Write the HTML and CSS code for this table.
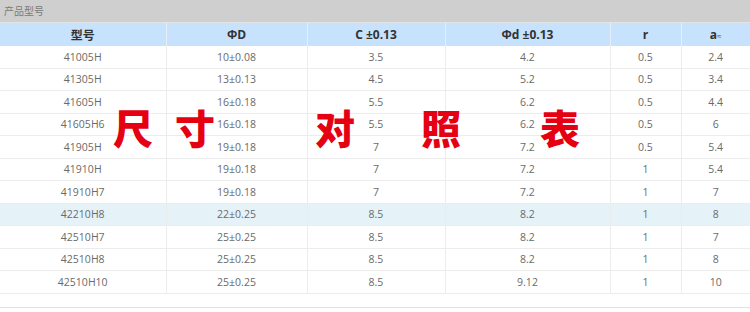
FILE: index.html
```html
<!DOCTYPE html>
<html lang="zh">
<head>
<meta charset="utf-8">
<link rel="stylesheet" href="styles.css">
</head>
<body>
<div class="page">
  <div class="titlebar">产品型号</div>
  <table class="spec">
    <colgroup>
      <col class="c1"><col class="c2"><col class="c3"><col class="c4"><col class="c5"><col class="c6">
    </colgroup>
    <thead>
      <tr><th>型号</th><th>ΦD</th><th>C ±0.13</th><th>Φd ±0.13</th><th>r</th><th>a<span class="approx">≈</span></th></tr>
    </thead>
    <tbody>
      <tr><td>41005H</td><td>10±0.08</td><td>3.5</td><td>4.2</td><td>0.5</td><td>2.4</td></tr>
      <tr><td>41305H</td><td>13±0.13</td><td>4.5</td><td>5.2</td><td>0.5</td><td>3.4</td></tr>
      <tr><td>41605H</td><td>16±0.18</td><td>5.5</td><td>6.2</td><td>0.5</td><td>4.4</td></tr>
      <tr><td>41605H6</td><td>16±0.18</td><td>5.5</td><td>6.2</td><td>0.5</td><td>6</td></tr>
      <tr><td>41905H</td><td>19±0.18</td><td>7</td><td>7.2</td><td>0.5</td><td>5.4</td></tr>
      <tr><td>41910H</td><td>19±0.18</td><td>7</td><td>7.2</td><td>1</td><td>5.4</td></tr>
      <tr><td>41910H7</td><td>19±0.18</td><td>7</td><td>7.2</td><td>1</td><td>7</td></tr>
      <tr class="hl"><td>42210H8</td><td>22±0.25</td><td>8.5</td><td>8.2</td><td>1</td><td>8</td></tr>
      <tr><td>42510H7</td><td>25±0.25</td><td>8.5</td><td>8.2</td><td>1</td><td>7</td></tr>
      <tr><td>42510H8</td><td>25±0.25</td><td>8.5</td><td>8.2</td><td>1</td><td>8</td></tr>
      <tr><td>42510H10</td><td>25±0.25</td><td>8.5</td><td>9.12</td><td>1</td><td>10</td></tr>
    </tbody>
  </table>
  <div class="footer-line"></div>
  <div class="overlay">
    <span class="big g1">尺</span>
    <span class="big g2">寸</span>
    <span class="big g3">对</span>
    <span class="big g4">照</span>
    <span class="big g5">表</span>
  </div>
</div>
</body>
</html>
```
FILE: styles.css
```css
html, body {
  margin: 0;
  padding: 0;
  background: #fff;
}
.page {
  position: relative;
  width: 750px;
  height: 312px;
  overflow: hidden;
  font-family: "Open Sans", "Noto Sans CJK SC", sans-serif;
}
.titlebar {
  height: 22px;
  line-height: 22px;
  background: #cfcfcf;
  color: #7a7a7a;
  font-size: 10px;
  padding-left: 4px;
  font-family: "Noto Sans CJK SC", sans-serif;
}
.spec {
  width: 750px;
  border-collapse: collapse;
  table-layout: fixed;
}
.c1 { width: 166px; }
.c2 { width: 141px; }
.c3 { width: 138px; }
.c4 { width: 165px; }
.c5 { width: 71px; }
.c6 { width: 69px; }
.spec th {
  height: 23px;
  padding: 0;
  background: #c6e2fc;
  color: #333;
  font-size: 12px;
  font-weight: bold;
  text-align: center;
  border-left: 1px solid #e6eef6;
  border-top: 1px solid #e4e4e4;
  font-family: "Open Sans", "Noto Sans CJK SC", sans-serif;
}
.spec th:first-child, .spec td:first-child { border-left: none; }
.approx {
  font-size: 8px;
  font-weight: normal;
  color: #555;
}
.spec td {
  height: 21.5px;
  padding: 0;
  font-size: 10.5px;
  color: #6a6a6a;
  text-align: center;
  border-left: 1px solid #ececec;
  border-bottom: 1px solid #ececec;
}
.spec tr.hl td {
  background: #e5f3f9;
}
.footer-line {
  margin-top: 13px;
  height: 1px;
  background: #e2e2e2;
}
.overlay {
  position: absolute;
  left: 0;
  top: 0;
  width: 750px;
  height: 312px;
  pointer-events: none;
}
.big {
  position: absolute;
  top: 104px;
  font-size: 40px;
  line-height: 46px;
  font-weight: 900;
  color: #e50012;
  font-family: "Noto Sans CJK SC", sans-serif;
}
.g1 { left: 113px; }
.g2 { left: 175px; }
.g3 { left: 315px; }
.g4 { left: 421px; }
.g5 { left: 540px; }
```
